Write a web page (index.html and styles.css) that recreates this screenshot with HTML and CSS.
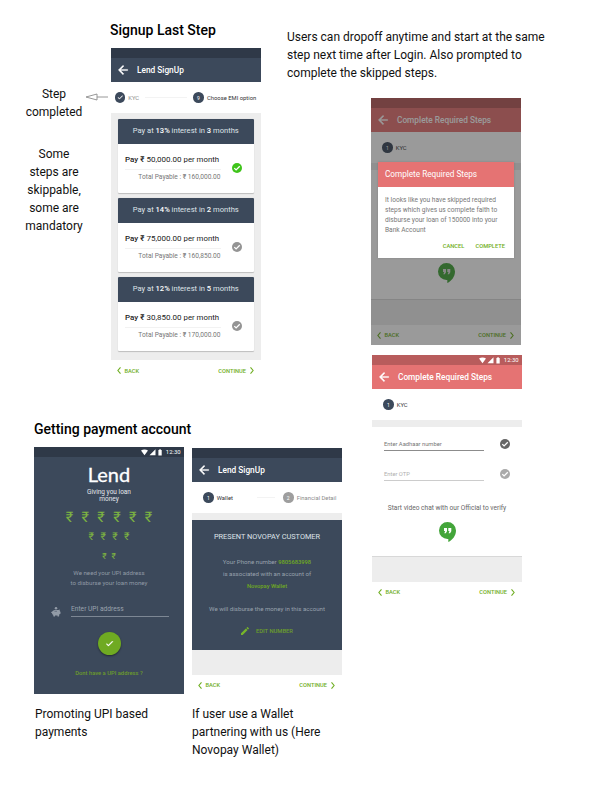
FILE: index.html
```html
<!DOCTYPE html>
<html lang="en">
<head>
<meta charset="utf-8">
<title>Lend flows</title>
<link rel="stylesheet" href="styles.css">
</head>
<body>
<svg class="sprite" width="0" height="0">
  <symbol id="back" viewBox="0 0 24 24"><path d="M20 11H7.83l5.59-5.59L12 4l-8 8 8 8 1.41-1.41L7.83 13H20v-2z" fill="currentColor" stroke="currentColor" stroke-width=".7"/></symbol>
  <symbol id="tick" viewBox="0 0 24 24"><path d="M9 16.17L4.83 12l-1.42 1.41L9 19 21 7l-1.41-1.41z" fill="currentColor" stroke="currentColor" stroke-width="1"/></symbol>
  <symbol id="check" viewBox="2 2 20 20"><path d="M12 2a10 10 0 1 0 0 20 10 10 0 0 0 0-20z" fill="currentColor"/><path d="M6.6 12.2l3.6 3.6 7.3-7.4" fill="none" stroke="#fff" stroke-width="2.600"/></symbol>
  <symbol id="left" viewBox="0 0 4 7"><path d="M3.5.4L.9 3.5l2.6 3.1" fill="none" stroke="currentColor" stroke-width="1.1"/></symbol>
  <symbol id="right" viewBox="0 0 4 7"><path d="M.5.4l2.6 3.1L.5 6.6" fill="none" stroke="currentColor" stroke-width="1.1"/></symbol>
  <symbol id="hangouts" viewBox="0 0 17 20"><path d="M8.5 0a8.5 8.5 0 0 0 0 17h.8v3C13.600 18 17 13.500 17 8.500A8.500 8.500 0 0 0 8.500 0z" fill="currentColor"/><path d="M5 6h3v3.200L6.800 11.300H5.300L6.200 9H5zM9.300 6h3v3.200l-1.200 2.100H9.600l.9-2.300H9.300z" fill="var(--quote, #fff)"/></symbol>
  <symbol id="signals" viewBox="0 0 22 7"><path d="M0 1.600C2 .1 5 .1 7 1.600L3.500 6.300zM14.500.3v6h-6zM17.400.9h.9V.3h1.500v.6h.9v5.600h-3.300z" fill="#fff"/></symbol>
  <symbol id="pig" viewBox="0 0 20 20"><circle cx="10" cy="2.500" r="2.500" fill="currentColor"/><path d="M2 10c1-3 4-4 8-4l5 .2L17.500 5v3l1.500 2v3.500l-2.300 1L16 19h-3v-2H8v2H5l-.8-3.500C2.600 14.500 2 13 2 11.800L0 11V9.500z" fill="currentColor"/><path d="M7 8.600h5" stroke="#3c495b" stroke-width="1"/></symbol>
  <symbol id="pencil" viewBox="3 3 18 18"><path d="M3 17.250V21h3.750L17.810 9.940l-3.750-3.750L3 17.250zM20.710 7.040a1 1 0 0 0 0-1.410l-2.340-2.340a1 1 0 0 0-1.410 0l-1.830 1.830 3.750 3.750 1.830-1.830z" fill="currentColor"/></symbol>
</svg>

<main class="board">
  <div class="col-left">
    <h2 class="title title-signup">Signup Last Step</h2>
    <div class="signup-row">
      <div class="notes">
        <div class="note-step">
          <p>Step completed</p>
          <svg class="pointer" width="23" height="8" viewBox="0 0 23 8"><path d="M1 4l11-3v6zM12 4h11" fill="none" stroke="#8c8c8c" stroke-width=".9"/></svg>
        </div>
        <p class="note-skip">Some<br>steps are<br>skippable,<br>some are<br>mandatory</p>
      </div>

      <section class="phone phone-emi">
        <div class="status"></div>
        <header class="appbar"><svg><use href="#back"/></svg><span>Lend SignUp</span></header>
        <div class="steps">
          <i class="dot"><svg><use href="#tick"/></svg></i><span class="step muted">KYC</span>
          <i class="link"></i>
          <i class="dot">9</i><span class="step step-on">Choose EMI option</span>
        </div>
        <div class="plans">
          <article class="plan">
            <h3>Pay at <b>13%</b> interest in <b>3</b> months</h3>
            <div class="plan-body">
              <div class="plan-text"><p class="pay"><b>Pay ₹</b> 50,000.00 <span>per month</span></p><p class="total">Total Payable : <b>₹</b> 160,000.00</p></div>
              <svg class="check green"><use href="#check"/></svg>
            </div>
          </article>
          <article class="plan">
            <h3>Pay at <b>14%</b> interest in <b>2</b> months</h3>
            <div class="plan-body">
              <div class="plan-text"><p class="pay"><b>Pay ₹</b> 75,000.00 <span>per month</span></p><p class="total">Total Payable : <b>₹</b> 160,850.00</p></div>
              <svg class="check grey"><use href="#check"/></svg>
            </div>
          </article>
          <article class="plan">
            <h3>Pay at <b>12%</b> interest in <b>5</b> months</h3>
            <div class="plan-body">
              <div class="plan-text"><p class="pay"><b>Pay ₹</b> 30,850.00 <span>per month</span></p><p class="total">Total Payable : <b>₹</b> 170,000.00</p></div>
              <svg class="check grey"><use href="#check"/></svg>
            </div>
          </article>
        </div>
        <footer class="nav"><svg><use href="#left"/></svg><span>BACK</span><span class="next">CONTINUE</span><svg><use href="#right"/></svg></footer>
      </section>
    </div>

    <h2 class="title title-account">Getting payment account</h2>
    <div class="account-row">
      <div class="account account-upi">
        <section class="phone phone-upi">
          <div class="status"><svg><use href="#signals"/></svg>12:30</div>
          <div class="upi">
            <h1>Lend</h1>
            <p class="tagline">Giving you loan<br>money</p>
            <div class="rupees rupees-l"><i>₹</i><i>₹</i><i>₹</i><i>₹</i><i>₹</i><i>₹</i></div>
            <div class="rupees rupees-m"><i>₹</i><i>₹</i><i>₹</i><i>₹</i></div>
            <div class="rupees rupees-s"><i>₹</i><i>₹</i></div>
            <p class="need">We need your UPI address<br>to disburse your loan money</p>
            <div class="upi-field"><svg><use href="#pig"/></svg><span>Enter UPI address</span></div>
            <div class="fab"><svg><use href="#tick"/></svg></div>
            <p class="dont">Dont have a UPI address ?</p>
          </div>
        </section>
        <p class="caption">Promoting UPI based<br>payments</p>
      </div>
      <div class="account account-wallet">
        <section class="phone phone-wallet">
          <div class="status"></div>
          <header class="appbar"><svg><use href="#back"/></svg><span>Lend SignUp</span></header>
          <div class="steps">
            <i class="dot">1</i><span class="step">Wallet</span>
            <i class="link"></i>
            <i class="dot dot-off">2</i><span class="step muted">Financial Detail</span>
          </div>
          <div class="customer">
            <h3>PRESENT NOVOPAY CUSTOMER</h3>
            <p class="linked">Your Phone number <b>9805683998</b><br>is associated with an account of<br><b>Novopay Wallet</b></p>
            <p class="disburse">We will disburse the money in this account</p>
            <p class="edit"><svg><use href="#pencil"/></svg><span>EDIT NUMBER</span></p>
          </div>
          <footer class="nav"><svg><use href="#left"/></svg><span>BACK</span><span class="next">CONTINUE</span><svg><use href="#right"/></svg></footer>
        </section>
        <p class="caption">If user use a Wallet<br>partnering with us (Here<br>Novopay Wallet)</p>
      </div>
    </div>
  </div>

  <div class="col-right">
    <p class="intro">Users can dropoff anytime and start at the same<br>step next time after Login. Also prompted to<br>complete the skipped steps.</p>
    <section class="phone phone-red phone-prompt">
      <div class="status"></div>
      <header class="appbar"><svg><use href="#back"/></svg><span>Complete Required Steps</span></header>
      <div class="steps"><i class="dot">1</i><span class="step">KYC</span></div>
      <div class="verify"><svg class="hangouts"><use href="#hangouts"/></svg></div>
      <footer class="nav"><svg><use href="#left"/></svg><span>BACK</span><span class="next">CONTINUE</span><svg><use href="#right"/></svg></footer>
      <div class="overlay">
        <div class="dialog">
          <h3>Complete Required Steps</h3>
          <p>It looks like you have skipped required<br>steps which gives us complete faith to<br>disburse your loan of 150000 into your<br>Bank Account</p>
          <div class="actions"><span>CANCEL</span><span>COMPLETE</span></div>
        </div>
      </div>
    </section>
    <section class="phone phone-red phone-kyc">
      <div class="status"><svg><use href="#signals"/></svg>12:30</div>
      <header class="appbar"><svg><use href="#back"/></svg><span>Complete Required Steps</span></header>
      <div class="steps"><i class="dot">1</i><span class="step">KYC</span></div>
      <div class="verify">
        <div class="field"><span>Enter Aadhaar number</span><svg class="check dark"><use href="#check"/></svg></div>
        <div class="field field-off"><span>Enter OTP</span><svg class="check light"><use href="#check"/></svg></div>
        <p class="video">Start video chat with our Official to verify</p>
        <svg class="hangouts"><use href="#hangouts"/></svg>
      </div>
      <footer class="nav"><svg><use href="#left"/></svg><span>BACK</span><span class="next">CONTINUE</span><svg><use href="#right"/></svg></footer>
    </section>
  </div>
</main>
</body>
</html>
```
FILE: styles.css
```css
* { box-sizing: border-box; margin: 0; padding: 0; }
body { width: 595px; height: 802px; background: #fff; color: #111; font: 12px/18px Roboto, "Noto Sans", sans-serif; overflow: hidden; }
i { font-style: normal; }
svg { display: block; flex: none; }
.sprite { position: absolute; }

.board { display: flex; }
.col-left { flex: none; width: 287px; padding-top: 21px; }
.col-right { flex: none; width: 300px; padding-top: 28px; }
.title { font-size: 14px; line-height: 18px; font-weight: 500; color: #000; white-space: nowrap; }
.title-signup { margin-left: 110px; }
.title-account { margin: 40px 0 0 34px; }
.signup-row { display: flex; margin-top: 9px; }
.notes { width: 111px; padding-top: 37px; }
.notes p { width: 60px; margin-left: 24px; text-align: center; }
.note-step { display: flex; }
.pointer { margin: 8px 0 0 1px; }
.notes .note-skip { margin-top: 24px; }
.account-row { display: flex; width: 342px; padding-left: 34px; margin-top: 9px; gap: 8px; }
.account { width: 150px; }
.account-wallet { padding-top: 1px; }
.caption { margin-top: 11px; white-space: nowrap; }
.account-upi .caption { padding-left: 1px; }
.account-wallet .caption { margin-top: 10px; }
.intro { white-space: nowrap; }

.phone { --bar: #3c495b; --status: #2f3948; width: 150px; height: 247px; display: flex; flex-direction: column; background: #ededed; }
.phone-red { --bar: #e57373; --status: #b85c5c; }
.status { height: 10px; flex: none; background: var(--status); display: flex; align-items: center; justify-content: flex-end; gap: 3px; padding-right: 3.500px; color: #fff; font-size: 5.900px; line-height: 10px; }
.status svg { width: 22px; height: 7px; }
.appbar { height: 24px; flex: none; background: var(--bar); color: #fff; display: flex; align-items: center; padding-left: 5px; font-size: 8.300px; font-weight: 500; line-height: 10px; }
.appbar svg { width: 14px; height: 14px; margin-right: 7px; }
.steps { height: 31px; flex: none; background: #fff; display: flex; align-items: center; padding-left: 11px; font-size: 5.850px; line-height: 8px; color: #333; }
.dot { width: 10.600px; height: 10.600px; border-radius: 50%; background: #3c495b; color: #fff; display: flex; align-items: center; justify-content: center; font-size: 5px; margin-right: 3.200px; flex: none; }
.dot svg { width: 6.500px; height: 6.500px; }
.dot-off { background: #9e9e9e; }
.step { white-space: nowrap; }
.step-on { color: #333; }
.muted { color: #8c8c8c; }
.link { height: 1px; background: #f3f3f3; }
.nav { margin-top: auto; height: 20px; flex: none; background: #fff; display: flex; align-items: center; padding: 0 7px 0 6px; color: #6fae22; font-size: 5.700px; line-height: 8px; font-weight: 500; }
.nav svg { width: 4px; height: 7px; }
.nav span { margin-left: 3.500px; }
.nav .next { margin: 0 4px 0 auto; }
.check { width: 10px; height: 10px; }
.green { color: #3fc41b; }
.grey { color: #949494; }
.dark { color: #666; }
.light { color: #aaa; }

.phone-emi { height: 332px; }
.phone-emi .steps { padding-left: 3.500px; }
.phone-emi .link { width: 42px; margin: 0 6px; }
.plans { flex: none; height: 247px; padding: 5.500px 7.500px 0 7px; display: flex; flex-direction: column; gap: 4.500px; }
.plan { height: 74.500px; flex: none; background: #fff; border-radius: 1px; box-shadow: 0 .5px 1px rgba(0, 0, 0, .2); overflow: hidden; }
.plan h3 { height: 25px; background: #3c495b; color: #dfe3e8; text-align: center; font-size: 7.580px; line-height: 24px; font-weight: 400; white-space: nowrap; }
.plan h3 b { font-weight: 500; color: #fff; }
.plan-body { height: 49px; display: flex; align-items: center; padding: 0 11.500px 0 7px; justify-content: space-between; }
.plan-text { width: 95.500px; padding-top: 1px; white-space: nowrap; }
.plan-text b { font-weight: 500; }
.pay { font-size: 8px; line-height: 13px; padding-bottom: 3px; border-bottom: 1px solid #f2f2f2; color: #222; }
.pay span { font-size: 7.800px; }
.total { font-size: 6.600px; line-height: 15px; text-align: right; color: #777; }
.phone-emi .nav { height: 21px; }

.upi { flex: 1; background: #3c495b; color: #e4e7eb; text-align: center; display: flex; flex-direction: column; align-items: center; }
.upi h1 { font: 400 20px/24px Lato, sans-serif; margin-top: 5px; color: #fff; -webkit-text-stroke: .3px #fff; }
.tagline { font-size: 6.500px; line-height: 7px; margin-top: 3px; }
.rupees { display: grid; grid-auto-flow: column; color: #7cb342; }
.rupees-l { grid-auto-columns: 15.800px; font-size: 14.500px; line-height: 18px; margin-top: 6px; }
.rupees-m { grid-auto-columns: 11.800px; font-size: 10.500px; line-height: 14px; margin-top: 3px; }
.rupees-s { grid-auto-columns: 9.400px; font-size: 8.400px; line-height: 10px; margin-top: 7px; }
.need { font-size: 6.150px; line-height: 10px; margin-top: 7px; color: #9099a5; }
.upi-field { align-self: stretch; display: flex; margin: 14px 15px 0 17px; }
.upi-field svg { width: 10px; height: 10px; margin-top: 5px; color: #929ba7; }
.upi-field span { flex: 1; margin-left: 10px; height: 15px; text-align: left; font-size: 6.650px; line-height: 14px; color: #9ba3ae; border-bottom: 1px solid #7d8794; }
.fab { width: 23px; height: 23px; flex: none; margin-top: 15px; border-radius: 50%; background: #6faa22; box-shadow: 0 1px 2px rgba(0, 0, 0, .45); display: flex; align-items: center; justify-content: center; color: #fff; }
.fab svg { width: 9px; height: 9px; }
.dont { font-size: 5.800px; line-height: 10px; font-weight: 500; margin-top: 13px; color: #6c9c2b; }

.phone-wallet .link { width: 18px; margin: 0 8px 0 24px; }
.phone-wallet .step { flex: none; }
.customer { flex: none; height: 130px; margin-top: 7px; background: #3c495b; color: #98a1ad; text-align: center; padding-top: 12px; font-size: 6.150px; }
.customer h3 { font-size: 7.350px; line-height: 10px; font-weight: 400; color: #dfe3e8; }
.linked { line-height: 12px; margin-top: 14px; }
.linked b { font-size: 5.800px; font-weight: 500; color: #6faa22; }
.disburse { line-height: 12px; margin-top: 11px; }
.edit { display: flex; align-items: center; padding-left: 49px; margin-top: 11px; line-height: 10px; font-size: 5.800px; font-weight: 500; color: #6c9f2b; }
.edit svg { width: 8px; height: 8px; margin-right: 7px; color: #77b52a; }

.verify { flex: none; height: 130px; margin-top: 7px; background: #fff; border-bottom: 1px solid #d8d8d8; display: flex; flex-direction: column; align-items: center; }
.hangouts { width: 17px; height: 20px; color: #43a53a; }
.phone-prompt { position: relative; margin: 16px 0 0 84px; }
.phone-prompt .hangouts { margin-top: 93px; --quote: #ddd; }
.overlay { position: absolute; inset: 0; background: rgba(35, 35, 35, .46); padding: 64px 7.500px 0 7px; }
.dialog { height: 96px; background: #fff; box-shadow: 0 0 2px rgba(0, 0, 0, .15); }
.dialog h3 { height: 25px; background: #e57373; color: #fff; padding-left: 7px; font-size: 8.200px; line-height: 25.500px; font-weight: 400; }
.dialog p { padding: 8px 0 0 7px; font-size: 6.600px; line-height: 10px; color: #777; white-space: nowrap; }
.actions { display: flex; justify-content: flex-end; gap: 11px; padding-right: 8.500px; margin-top: 7px; font-size: 5.750px; line-height: 8px; font-weight: 500; color: #6fae22; }

.phone-kyc { margin: 10px 0 0 85px; }
.field { align-self: stretch; display: flex; justify-content: space-between; align-items: flex-start; height: 15px; margin: 10px 12px 0; }
.field + .field { margin-top: 15px; }
.field svg { margin-top: 1.500px; }
.field span { width: 100px; height: 14px; border-bottom: 1px solid #8c8c8c; font-size: 5.800px; line-height: 14px; color: #777; }
.field-off span { border-color: #ccc; color: #b0b0b0; }
.video { font-size: 6.600px; line-height: 10px; margin-top: 21px; color: #666; }
.phone-kyc .hangouts { margin-top: 9px; }
```
